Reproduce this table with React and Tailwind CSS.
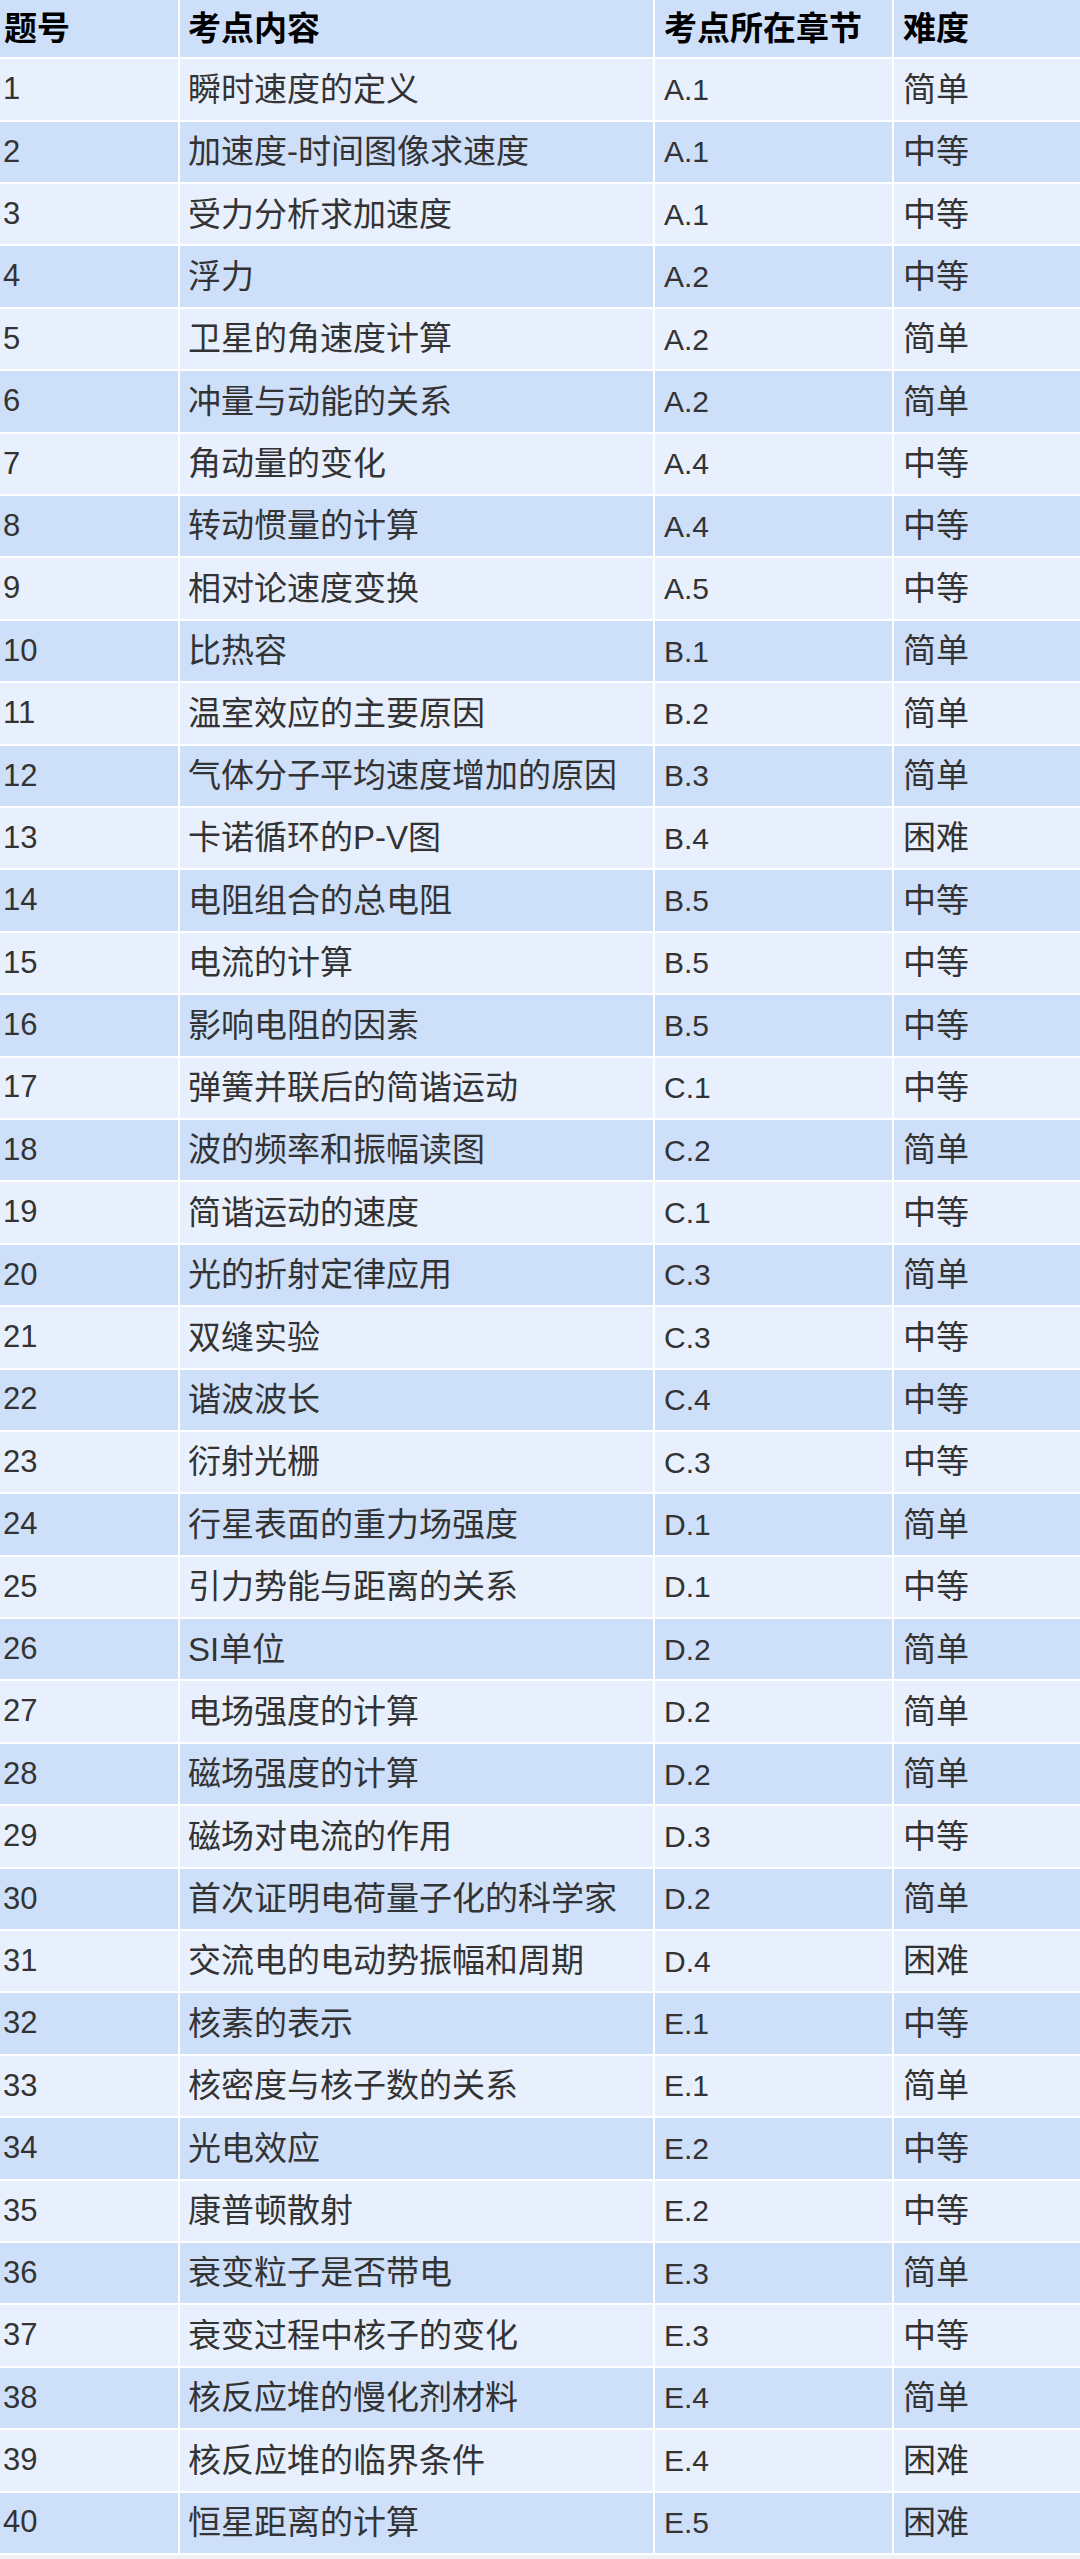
import React from "react";

const rows = [
  ["1", "瞬时速度的定义", "A.1", "简单"],
  ["2", "加速度-时间图像求速度", "A.1", "中等"],
  ["3", "受力分析求加速度", "A.1", "中等"],
  ["4", "浮力", "A.2", "中等"],
  ["5", "卫星的角速度计算", "A.2", "简单"],
  ["6", "冲量与动能的关系", "A.2", "简单"],
  ["7", "角动量的变化", "A.4", "中等"],
  ["8", "转动惯量的计算", "A.4", "中等"],
  ["9", "相对论速度变换", "A.5", "中等"],
  ["10", "比热容", "B.1", "简单"],
  ["11", "温室效应的主要原因", "B.2", "简单"],
  ["12", "气体分子平均速度增加的原因", "B.3", "简单"],
  ["13", "卡诺循环的P-V图", "B.4", "困难"],
  ["14", "电阻组合的总电阻", "B.5", "中等"],
  ["15", "电流的计算", "B.5", "中等"],
  ["16", "影响电阻的因素", "B.5", "中等"],
  ["17", "弹簧并联后的简谐运动", "C.1", "中等"],
  ["18", "波的频率和振幅读图", "C.2", "简单"],
  ["19", "简谐运动的速度", "C.1", "中等"],
  ["20", "光的折射定律应用", "C.3", "简单"],
  ["21", "双缝实验", "C.3", "中等"],
  ["22", "谐波波长", "C.4", "中等"],
  ["23", "衍射光栅", "C.3", "中等"],
  ["24", "行星表面的重力场强度", "D.1", "简单"],
  ["25", "引力势能与距离的关系", "D.1", "中等"],
  ["26", "SI单位", "D.2", "简单"],
  ["27", "电场强度的计算", "D.2", "简单"],
  ["28", "磁场强度的计算", "D.2", "简单"],
  ["29", "磁场对电流的作用", "D.3", "中等"],
  ["30", "首次证明电荷量子化的科学家", "D.2", "简单"],
  ["31", "交流电的电动势振幅和周期", "D.4", "困难"],
  ["32", "核素的表示", "E.1", "中等"],
  ["33", "核密度与核子数的关系", "E.1", "简单"],
  ["34", "光电效应", "E.2", "中等"],
  ["35", "康普顿散射", "E.2", "中等"],
  ["36", "衰变粒子是否带电", "E.3", "简单"],
  ["37", "衰变过程中核子的变化", "E.3", "中等"],
  ["38", "核反应堆的慢化剂材料", "E.4", "简单"],
  ["39", "核反应堆的临界条件", "E.4", "困难"],
  ["40", "恒星距离的计算", "E.5", "困难"],
];

const font = { fontFamily: '"Liberation Sans", "Noto Sans CJK SC", sans-serif' };

export default function App() {
  return (
    <div className="min-h-screen bg-[#eff1f5]" style={font}>
      <div className="grid grid-cols-[178px_473px_237px_186px] gap-[2px] bg-white pb-[2px] text-[33px]">
        <div className="flex h-[57.3px] items-center bg-[#cedffa] pl-[4px] font-bold text-black">题号</div>
        <div className="flex h-[57.3px] items-center bg-[#cedffa] pl-[8px] font-bold text-black">考点内容</div>
        <div className="flex h-[57.3px] items-center bg-[#cedffa] pl-[9px] font-bold text-black">考点所在章节</div>
        <div className="flex h-[57.3px] items-center bg-[#cedffa] pl-[9px] font-bold text-black">难度</div>
        {rows.map((r, i) => {
          const bg = i % 2 === 0 ? "bg-[#e8f0fe]" : "bg-[#cedffa]";
          return (
            <React.Fragment key={r[0]}>
              <div className={`flex h-[60.4px] items-center pl-[3px] text-[31px] text-[#333] ${bg}`}>{r[0]}</div>
              <div className={`flex h-[60.4px] items-center pl-[8px] text-[#333] ${bg}`}>{r[1]}</div>
              <div className={`flex h-[60.4px] items-center pl-[9px] text-[30px] text-[#333] ${bg}`}>{r[2]}</div>
              <div className={`flex h-[60.4px] items-center pl-[9px] text-[#333] ${bg}`}>{r[3]}</div>
            </React.Fragment>
          );
        })}
      </div>
    </div>
  );
}
